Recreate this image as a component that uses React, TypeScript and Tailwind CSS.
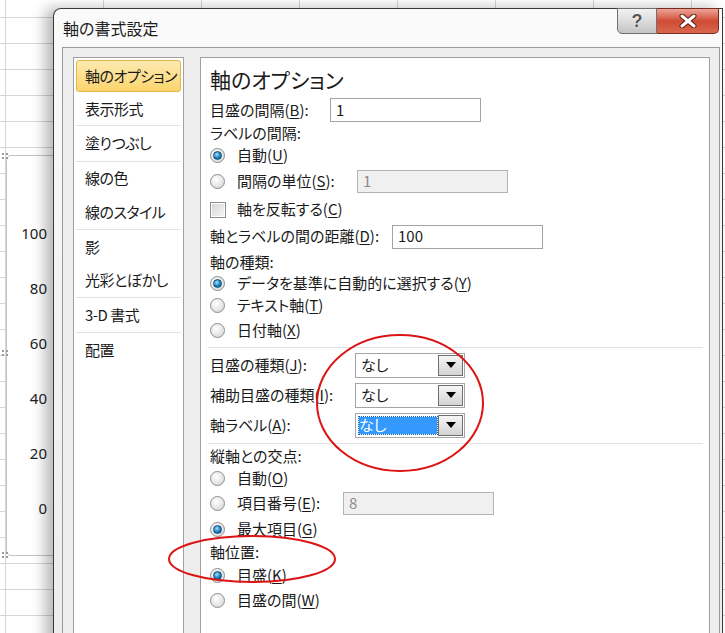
import type { ReactNode } from "react";

const jp = "font-['Noto_Sans_CJK_JP',sans-serif] [font-feature-settings:'palt']";

function U({ children }: { children: ReactNode }) {
  return <span className="underline underline-offset-2">{children}</span>;
}

function Radio({ checked }: { checked?: boolean }) {
  return (
    <span className="flex h-[15px] w-[15px] shrink-0 items-center justify-center rounded-full border border-[#8d8d8d] bg-[radial-gradient(circle_at_40%_35%,#ffffff,#d2d2d2)]">
      {checked && (
        <span className="h-[9px] w-[9px] rounded-full border border-[#0b4f7c] bg-[radial-gradient(circle_at_40%_35%,#9fe0ff,#1877b4_60%,#0a4e7e)]" />
      )}
    </span>
  );
}

function Checkbox() {
  return (
    <span className="flex h-[16px] w-[16px] shrink-0 items-center justify-center border border-[#8d8d8d] bg-white">
      <span className="h-[12px] w-[12px] bg-gradient-to-br from-[#d8d8d8] to-[#f4f4f4]" />
    </span>
  );
}

function TextBox({ value, disabled }: { value: string; disabled?: boolean }) {
  return (
    <div
      className={
        disabled
          ? "flex h-[23px] w-[151px] items-center border border-[#b3b3b3] bg-[#f0f0f0] pl-[5px] text-[#8c8c8c]"
          : "flex h-[24px] w-[151px] items-center border border-[#a3a3a3] bg-white pl-[5px]"
      }
    >
      {value}
    </div>
  );
}

function Combo({ selected }: { selected?: boolean }) {
  return (
    <div className="flex h-[25px] w-[110px] items-stretch border border-[#a6a6a6] bg-white p-[1px]">
      <div className="flex flex-1 items-center pl-[2px] pr-[1px]">
        {selected ? (
          <span className="flex h-[17px] w-full items-center bg-[#3399ff] text-white outline-1 outline-dotted outline-[#1b5fa8]">
            なし
          </span>
        ) : (
          <span className="pl-[2px]">なし</span>
        )}
      </div>
      <div className="flex w-[25px] items-center justify-center border border-[#6e6e6e] bg-gradient-to-b from-[#f6f6f6] to-[#d3d3d3]">
        <svg width="10" height="6" viewBox="0 0 10 6">
          <path d="M0 0h10L5 6z" fill="#000" />
        </svg>
      </div>
    </div>
  );
}

function RadioRow({
  checked,
  className,
  children,
}: {
  checked?: boolean;
  className: string;
  children: ReactNode;
}) {
  return (
    <div className={`flex items-center ${className}`}>
      <Radio checked={checked} />
      <span className="ml-[12px]">{children}</span>
    </div>
  );
}

const navItems = [
  { label: "軸のオプション", h: "h-[34px]", active: true },
  { label: "表示形式", h: "h-[33px] border-b border-[#e3e3e3]" },
  { label: "塗りつぶし", h: "h-[36px] border-b border-[#e3e3e3]" },
  { label: "線の色", h: "h-[33px]" },
  { label: "線のスタイル", h: "h-[35px] border-b border-[#e3e3e3]" },
  { label: "影", h: "h-[34px]" },
  { label: "光彩とぼかし", h: "h-[34px] border-b border-[#e3e3e3]" },
  { label: "3-D 書式", h: "h-[35px] border-b border-[#e3e3e3]" },
  { label: "配置", h: "h-[34px]" },
];

function Nav() {
  return (
    <div className="flex w-[111px] shrink-0 flex-col border border-[#a0a0a0] bg-white px-[2px] pt-[1px] text-[15px] tracking-[-0.5px] whitespace-nowrap">
      {navItems.map((item) => (
        <div key={item.label} className={`flex items-center ${item.h}`}>
          {item.active ? (
            <div className="flex h-[32px] w-full items-center rounded-[3px] border border-[#e2b54c] bg-gradient-to-b from-[#fdeab0] to-[#fbd46c] pl-[8px]">
              {item.label}
            </div>
          ) : (
            <span className="pl-[9px]">{item.label}</span>
          )}
        </div>
      ))}
    </div>
  );
}

function Separator({ className }: { className: string }) {
  return <div className={`-ml-[2px] w-[495px] border-t border-[#e2e2e2] ${className}`} />;
}

function AxisOptions() {
  return (
    <div className="flex w-[510px] shrink-0 flex-col border border-[#a0a0a0] bg-white pl-[9px] pt-[4px] text-[15px] whitespace-nowrap text-[#1a1a1a]">
      <div className="flex h-[36px] items-center text-[21px]">軸のオプション</div>
      <div className="flex h-[24px] items-center">
        <span className="w-[120px]">
          目盛の間隔(<U>B</U>):
        </span>
        <TextBox value="1" />
      </div>
      <div className="flex h-[23px] items-center">ラベルの間隔:</div>
      <RadioRow checked className="h-[21px]">
        自動(<U>U</U>)
      </RadioRow>
      <div className="flex h-[31px] items-center">
        <div className="flex w-[147px] items-center">
          <Radio />
          <span className="ml-[12px]">
            間隔の単位(<U>S</U>):
          </span>
        </div>
        <TextBox value="1" disabled />
      </div>
      <div className="flex h-[25px] items-center">
        <Checkbox />
        <span className="ml-[11px]">
          軸を反転する(<U>C</U>)
        </span>
      </div>
      <div className="flex h-[29px] items-center">
        <span className="w-[182px]">
          軸とラベルの間の距離(<U>D</U>):
        </span>
        <TextBox value="100" />
      </div>
      <div className="flex h-[22px] items-center">軸の種類:</div>
      <RadioRow checked className="h-[21px]">
        データを基準に自動的に選択する(<U>Y</U>)
      </RadioRow>
      <RadioRow className="h-[23px]">
        テキスト軸(<U>T</U>)
      </RadioRow>
      <RadioRow className="h-[26px]">
        日付軸(<U>X</U>)
      </RadioRow>
      <Separator className="mt-[4px]" />
      <div className="mt-[2px] flex h-[30px] items-center">
        <span className="w-[145px]">
          目盛の種類(<U>J</U>):
        </span>
        <Combo />
      </div>
      <div className="flex h-[30px] items-center">
        <span className="w-[145px]">
          補助目盛の種類(<U>I</U>):
        </span>
        <Combo />
      </div>
      <div className="flex h-[30px] items-center">
        <span className="w-[145px]">
          軸ラベル(<U>A</U>):
        </span>
        <Combo selected />
      </div>
      <Separator className="mt-[3px]" />
      <div className="flex h-[24px] items-center">縦軸との交点:</div>
      <RadioRow className="h-[21px]">
        自動(<U>O</U>)
      </RadioRow>
      <div className="flex h-[28px] items-center">
        <div className="flex w-[133px] items-center">
          <Radio />
          <span className="ml-[12px]">
            項目番号(<U>E</U>):
          </span>
        </div>
        <TextBox value="8" disabled />
      </div>
      <RadioRow checked className="h-[24px]">
        最大項目(<U>G</U>)
      </RadioRow>
      <div className="flex h-[22px] items-center">軸位置:</div>
      <RadioRow checked className="h-[24px]">
        目盛(<U>K</U>)
      </RadioRow>
      <RadioRow className="h-[26px]">
        目盛の間(<U>W</U>)
      </RadioRow>
    </div>
  );
}

function TitleButtons() {
  return (
    <div className="-mt-[1px] mr-[3px] ml-auto flex h-[26px]">
      <div className="flex w-[40px] items-center justify-center rounded-bl-[5px] border border-[#6f6f6f] bg-gradient-to-b from-[#f2f2f2] via-[#dcdcdc] to-[#c4c4c4] font-['Liberation_Sans',sans-serif] text-[18px] font-bold text-[#555] [text-shadow:0_0_2px_#ffffff,0_0_1px_#ffffff]">
        ?
      </div>
      <div className="flex w-[62px] items-center justify-center rounded-br-[5px] border border-l-0 border-[#7a2a1c] bg-gradient-to-b from-[#eaa598] via-[#cf4a33] to-[#d8674c]">
        <svg width="18" height="14" viewBox="0 0 18 14">
          <path d="M3 2l12 10M15 2L3 12" stroke="#5a1c12" strokeWidth="5" strokeLinecap="round" />
          <path d="M3 2l12 10M15 2L3 12" stroke="#ffffff" strokeWidth="3" strokeLinecap="round" />
        </svg>
      </div>
    </div>
  );
}

function Handle({ className }: { className: string }) {
  return (
    <div className={`absolute grid grid-cols-2 gap-[2px] ${className}`}>
      <span className="h-[2px] w-[2px] bg-[#9a9a9a]" />
      <span className="h-[2px] w-[2px] bg-[#9a9a9a]" />
      <span className="h-[2px] w-[2px] bg-[#9a9a9a]" />
      <span className="h-[2px] w-[2px] bg-[#9a9a9a]" />
    </div>
  );
}

function ChartBehind() {
  const ticks = ["100", "80", "60", "40", "20", "0"];
  return (
    <div className="absolute left-[6px] top-[155px] h-[401px] w-[70px] rounded-[5px] border border-[#c4c4c4] bg-white">
      <div className="flex w-[40px] flex-col pt-[50px] text-right font-['Noto_Sans',sans-serif] text-[15px] text-[#222]">
        {ticks.map((t) => (
          <div key={t} className="flex h-[55px] items-center justify-end">
            {t}
          </div>
        ))}
      </div>
      <Handle className="-left-[5px] -top-[3px]" />
      <Handle className="-left-[5px] top-[194px]" />
      <Handle className="-bottom-[3px] -left-[5px]" />
    </div>
  );
}

export default function App() {
  return (
    <div
      className={`relative h-[633px] w-[725px] overflow-hidden bg-white bg-[linear-gradient(to_right,#d6d6d6_1px,transparent_1px),linear-gradient(to_bottom,#d6d6d6_1px,transparent_1px)] bg-size-[98px_26px] bg-position-[5px_17px] pl-[53px] pt-[8px] text-[#1a1a1a] ${jp}`}
    >
      <ChartBehind />
      <div className="relative flex h-[640px] w-[670px] flex-col rounded-tl-[8px] border-l border-r border-t border-[#3a3a3a] bg-gradient-to-b from-[#fafafa] to-[#ececec] shadow-[-8px_0_14px_rgba(0,0,0,0.28)]">
        <div className="flex h-[38px] items-start">
          <div className="flex h-full items-center pl-[9px] text-[16px] text-[#1e1e1e]">軸の書式設定</div>
          <TitleButtons />
        </div>
        <div className="ml-[8px] mr-[2px] flex flex-1 gap-[16px] border-l border-r border-t border-[#9a9a9a] bg-[#eeeeee] pl-[10px] pr-[9px] pt-[9px]">
          <Nav />
          <AxisOptions />
        </div>
      </div>
      <svg className="pointer-events-none absolute left-0 top-0" width="725" height="633">
        <ellipse cx="400" cy="403" rx="83" ry="68" fill="none" stroke="#dc1414" strokeWidth="2" />
        <ellipse cx="252" cy="559" rx="83" ry="23" fill="none" stroke="#dc1414" strokeWidth="2" />
      </svg>
    </div>
  );
}
